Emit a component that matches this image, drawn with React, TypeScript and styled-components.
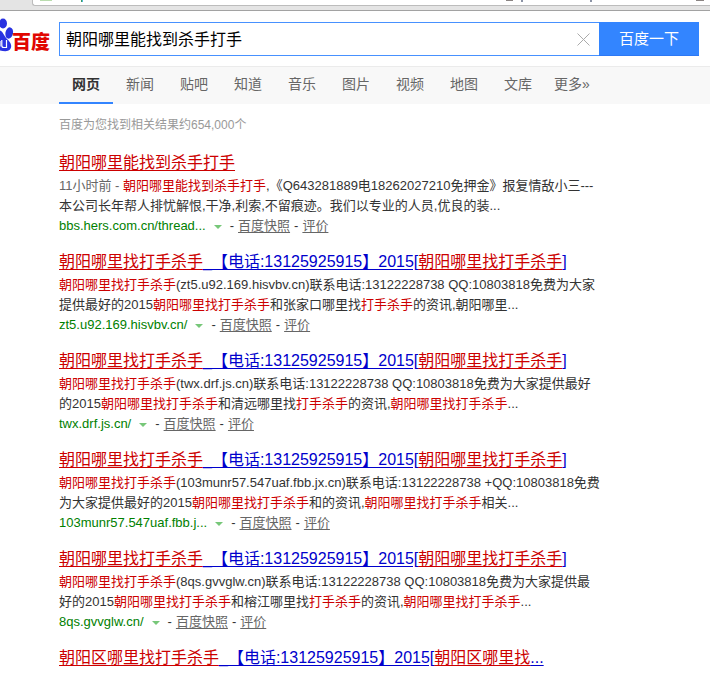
import React, { useState } from "react";
import styled, { createGlobalStyle } from "styled-components";

const GlobalStyle = createGlobalStyle`
  * { box-sizing: border-box; }
  body {
    margin: 0;
    background: #fff;
    color: #333;
    font-family: "Liberation Sans", "Noto Sans CJK SC", sans-serif;
    font-size: 13px;
    overflow: hidden;
  }
`;

const Page = styled.div`
  display: flex;
  flex-direction: column;
`;

const BrowserEdge = styled.div`
  height: 11px;
  flex: none;
  display: flex;
  flex-direction: column;
  background: #e4e4e4;
  border-bottom: 1px solid #a2a2a2;
`;

const AddressBar = styled.div`
  height: 6px;
  margin-left: 32px;
  background: #fff;
  border: solid #bcbcbc;
  border-width: 0 0 1px 1px;
  border-bottom-left-radius: 3px;

  svg { display: block; }
`;

const Header = styled.header`
  display: flex;
  padding: 11px 11px 10px 0;
`;

const LogoLink = styled.a`
  width: 59px;
  flex: none;
  height: 34px;
  svg { display: block; }
`;

const SearchForm = styled.form`
  display: flex;
  flex: 1;
  max-width: 640px;
`;

const SearchField = styled.div`
  flex: 1;
  min-width: 0;
  display: flex;
  align-items: center;
  height: 34px;
  border: 1px solid #4791ff;
  border-right: 0;
`;

const SearchInput = styled.input`
  flex: 1;
  min-width: 0;
  height: 32px;
  padding: 0 6px 2px;
  border: 0;
  outline: 0;
  background: transparent;
  color: #000;
  font: 16px "Liberation Sans", "Noto Sans CJK SC", sans-serif;
`;

const ClearButton = styled.button`
  width: 32px;
  height: 32px;
  padding: 0;
  border: 0;
  background: none;
  display: grid;
  place-items: center;
`;

const SubmitButton = styled.button`
  width: 100px;
  height: 34px;
  padding: 0 0 2px;
  border: 0;
  border-bottom: 1px solid #2d78f4;
  background: #3385ff;
  color: #fff;
  font: 15px "Liberation Sans", "Noto Sans CJK SC", sans-serif;
`;

const TabBar = styled.nav`
  display: flex;
  padding-left: 59px;
  height: 38px;
  background: #f8f8f8;
  border-top: 1px solid #ebebeb;
`;

const Tab = styled.a<{ $active?: boolean }>`
  width: 54px;
  text-align: center;
  line-height: 35px;
  font-size: 14px;
  white-space: nowrap;
  text-decoration: none;
  color: ${(p) => (p.$active ? "#323232" : "#666")};
  font-weight: ${(p) => (p.$active ? 700 : 400)};
  border-bottom: 2px solid ${(p) => (p.$active ? "#3385ff" : "transparent")};
`;

const Main = styled.main`
  padding: 0 11px 0 59px;
`;

const ResultCount = styled.p`
  margin: 0;
  height: 46px;
  line-height: 43px;
  font-size: 12px;
  color: #999;
`;

const Result = styled.article`
  margin-bottom: 13px;
  white-space: nowrap;
`;

const Title = styled.h3`
  margin: 0;
  padding-bottom: 1px;
  font-size: 16px;
  font-weight: 400;
  line-height: 25px;
`;

const TitleLink = styled.a`
  color: #0000cc;
  text-decoration: underline;
  text-underline-offset: 2px;
`;

const Hit = styled.em`
  font-style: normal;
  color: #cc0000;
  text-decoration: inherit;
  text-underline-offset: 2px;
`;

const Snippet = styled.p`
  margin: 0;
  line-height: 20px;
`;

const Age = styled.span`
  color: #666;
`;

const Source = styled.div`
  display: flex;
  align-items: center;
  gap: 4px;
  line-height: 20px;
`;

const SourceUrl = styled.a`
  color: #008000;
  text-decoration: none;
`;

const MenuButton = styled.button`
  width: 16px;
  height: 16px;
  padding: 2px 0 0;
  border: 0;
  background: none;
  display: grid;
  place-items: center;
`;

const SmallLink = styled.a`
  color: #666;
  text-decoration: underline;
  text-underline-offset: 2px;
`;

/* Text between pipes is a keyword hit. */
const Marked = ({ text }: { text: string }) => (
  <>
    {text.split("|").map((part, i) =>
      i % 2 ? <Hit key={i}>{part}</Hit> : <React.Fragment key={i}>{part}</React.Fragment>
    )}
  </>
);

const tabs = ["网页", "新闻", "贴吧", "知道", "音乐", "图片", "视频", "地图", "文库", "更多»"];

type Item = { title: string; age?: string; lines: string[]; url?: string };

const commonTitle = "|朝阳哪里找打手杀手|_【电话:13125925915】2015[|朝阳哪里找打手杀手|]";

const results: Item[] = [
  {
    title: "|朝阳哪里能找到杀手打手|",
    age: "11小时前 - ",
    lines: [
      "|朝阳哪里能找到杀手打手|,《Q643281889电18262027210免押金》报复情敌小三---",
      "本公司长年帮人排忧解恨,干净,利索,不留痕迹。我们以专业的人员,优良的装...",
    ],
    url: "bbs.hers.com.cn/thread...",
  },
  {
    title: commonTitle,
    lines: [
      "|朝阳哪里找打手杀手|(zt5.u92.169.hisvbv.cn)联系电话:13122228738 QQ:10803818免费为大家",
      "提供最好的2015|朝阳哪里找打手杀手|和张家口哪里找|打手杀手|的资讯,朝阳哪里...",
    ],
    url: "zt5.u92.169.hisvbv.cn/",
  },
  {
    title: commonTitle,
    lines: [
      "|朝阳哪里找打手杀手|(twx.drf.js.cn)联系电话:13122228738 QQ:10803818免费为大家提供最好",
      "的2015|朝阳哪里找打手杀手|和清远哪里找|打手杀手|的资讯,|朝阳哪里找打手杀手|...",
    ],
    url: "twx.drf.js.cn/",
  },
  {
    title: commonTitle,
    lines: [
      "|朝阳哪里找打手杀手|(103munr57.547uaf.fbb.jx.cn)联系电话:13122228738 +QQ:10803818免费",
      "为大家提供最好的2015|朝阳哪里找打手杀手|和的资讯,|朝阳哪里找打手杀手|相关...",
    ],
    url: "103munr57.547uaf.fbb.j...",
  },
  {
    title: commonTitle,
    lines: [
      "|朝阳哪里找打手杀手|(8qs.gvvglw.cn)联系电话:13122228738 QQ:10803818免费为大家提供最",
      "好的2015|朝阳哪里找打手杀手|和榕江哪里找|打手杀手|的资讯,|朝阳哪里找打手杀手|...",
    ],
    url: "8qs.gvvglw.cn/",
  },
  {
    title: "|朝阳区哪里找打手杀手|_【电话:13125925915】2015[|朝阳区哪里找|...",
    lines: [],
  },
];

export default function App() {
  const [query, setQuery] = useState("朝阳哪里能找到杀手打手");
  return (
    <Page>
      <GlobalStyle />
      <BrowserEdge>
        <AddressBar>
          <svg width="677" height="3" aria-hidden="true">
            <rect x="7" y="0" width="12" height="1" fill="#b9dcae" />
            <rect x="48" y="0" width="1" height="2" fill="#3c9a5c" />
            <rect x="49" y="0" width="1" height="2" fill="#4fb4d8" />
            <rect x="473" y="0" width="7" height="1" fill="#8a8483" />
            <rect x="488" y="0" width="2" height="2" fill="#8b93a5" />
            <rect x="557" y="0" width="2" height="2" fill="#8b93a5" />
            <rect x="663" y="0" width="8" height="1" fill="#8a8483" />
          </svg>
        </AddressBar>
      </BrowserEdge>
      <Header>
        <LogoLink href="#" aria-label="百度">
          <svg width="59" height="34" viewBox="0 22 59 34" overflow="visible" aria-hidden="true">
            <ellipse cx="3" cy="23.5" rx="4" ry="5" fill="#2932e1" />
            <ellipse cx="9.2" cy="33" rx="3.8" ry="5.7" transform="rotate(12 9.2 33)" fill="#2932e1" />
            <path d="M0 30.5C3 31.5 4 36 7 39C11 42.5 12.5 46.5 10 49.5C7.500 52 3.5 51 0 50.500Z" fill="#2932e1" />
            <path d="M0 41V46.500M1.8 40V45.500Q1.8 47.500 3.8 47.500H6.5V40" fill="none" stroke="#fff" strokeWidth="1.2" />
            <text x="12" y="49" fontSize="19" fontWeight="900" fill="#e10601" fontFamily='"Noto Sans CJK SC", sans-serif'>百度</text>
          </svg>
        </LogoLink>
        <SearchForm onSubmit={(e) => e.preventDefault()}>
          <SearchField>
            <SearchInput aria-label="搜索" value={query} onChange={(e) => setQuery(e.target.value)} />
            <ClearButton type="button" aria-label="清除" onClick={() => setQuery("")}>
              <svg width="13" height="13" viewBox="0 0 13 13" stroke="#aaa" strokeWidth="1">
                <path d="M.5 .5L12.5 12.5M12.5 .5L.5 12.5" />
              </svg>
            </ClearButton>
          </SearchField>
          <SubmitButton type="submit">百度一下</SubmitButton>
        </SearchForm>
      </Header>
      <TabBar>
        {tabs.map((t, i) => (
          <Tab key={t} href="#" $active={i === 0}>{t}</Tab>
        ))}
      </TabBar>
      <Main>
        <ResultCount>百度为您找到相关结果约654,000个</ResultCount>
        {results.map((r, i) => (
          <Result key={i}>
            <Title>
              <TitleLink href="#"><Marked text={r.title} /></TitleLink>
            </Title>
            {r.lines.length > 0 && (
              <Snippet>
                {r.age && <Age>{r.age}</Age>}
                <Marked text={r.lines[0]} />
                <br />
                <Marked text={r.lines[1]} />
              </Snippet>
            )}
            {r.url && (
              <Source>
                <SourceUrl href="#">{r.url}</SourceUrl>
                <MenuButton type="button" aria-label="更多操作">
                  <svg width="8" height="4" viewBox="0 0 8 4"><path d="M0 0H8L4 4Z" fill="#77c779" /></svg>
                </MenuButton>
                <span>-</span>
                <SmallLink href="#">百度快照</SmallLink>
                <span>-</span>
                <SmallLink href="#">评价</SmallLink>
              </Source>
            )}
          </Result>
        ))}
      </Main>
    </Page>
  );
}
